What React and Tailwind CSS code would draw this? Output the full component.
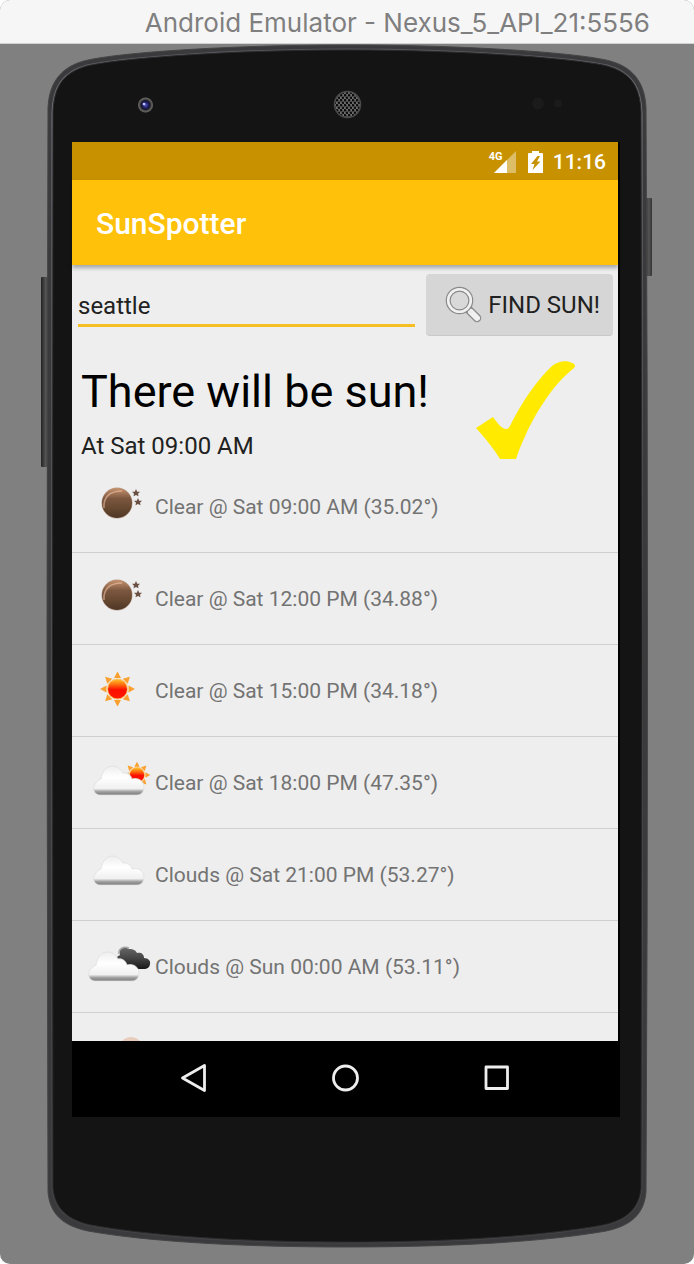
import React, { useState } from "react";

const SHELL =
  "M307 1 C430 1 540 9 570 17 C596 24 605 42 606 64 Q609 604 606 1148 C604 1171 590 1182 566 1187 C510 1197 420 1203 307 1203 C194 1203 104 1197 48 1187 C24 1182 10 1171 8 1148 Q6 604 8 64 C9 42 18 24 44 17 C74 9 184 1 307 1 Z";
const FACE =
  "M307 6 C430 6 538 15 567 22 C592 29 600 44 601 68 Q603 604 601 1144 C599 1165 586 1176 563 1181 C508 1191 420 1198 307 1198 C194 1198 106 1191 51 1181 C28 1176 15 1165 13 1144 Q12 604 13 68 C14 44 22 29 47 22 C76 15 184 6 307 6 Z";

function DeviceShell() {
  return (
    <svg
      className="absolute inset-0 h-full w-full"
      viewBox="0 0 614 1204"
      preserveAspectRatio="none"
      aria-hidden="true"
    >
      <defs>
        <linearGradient id="key" x1="0" x2="1" y1="0" y2="0">
          <stop offset="0" stopColor="#222" />
          <stop offset="0.6" stopColor="#555" />
          <stop offset="1" stopColor="#333" />
        </linearGradient>
        <linearGradient id="rim" x1="0" x2="0" y1="0" y2="1">
          <stop offset="0" stopColor="#55555a" />
          <stop offset="0.06" stopColor="#76767c" />
          <stop offset="0.6" stopColor="#5a5a5e" />
          <stop offset="1" stopColor="#424244" />
        </linearGradient>
        <pattern id="mesh" width="4" height="5" patternUnits="userSpaceOnUse">
          <rect width="4" height="5" fill="#6c6c6c" />
          <circle cx="1" cy="1.2" r="1.3" fill="#0c0c0c" />
          <circle cx="3" cy="3.7" r="1.3" fill="#0c0c0c" />
        </pattern>
        <radialGradient id="lens">
          <stop offset="0" stopColor="#5a5ad0" />
          <stop offset="0.35" stopColor="#23236e" />
          <stop offset="0.6" stopColor="#14142a" />
          <stop offset="0.75" stopColor="#4c4a48" />
          <stop offset="1" stopColor="#6c6c6c" />
        </radialGradient>
      </defs>
      <rect x="1" y="233" width="8" height="190" rx="1" fill="url(#key)" />
      <rect x="604" y="154" width="8" height="78" rx="1" fill="url(#key)" />
      <path d={SHELL} fill="#3a3a3c" stroke="#444446" strokeWidth="1" />
      <path d={FACE} fill="#141414" stroke="url(#rim)" strokeWidth="3" />
      <path d={FACE} fill="#141414" stroke="#29292b" strokeWidth="1" />
      <circle cx="105.500" cy="61" r="7.500" fill="url(#lens)" />
      <circle cx="104" cy="60" r="1.300" fill="#c5c5ff" />
      <circle cx="307.500" cy="60.500" r="13" fill="url(#mesh)" stroke="#4a4a4a" strokeWidth="1.500" />
      <circle cx="498" cy="59.500" r="6" fill="#1b1b1b" />
      <circle cx="518" cy="59.500" r="4" fill="#1b1b1b" />
    </svg>
  );
}

const CLOUD =
  "M7 29 C1 29 -1 22 2 18 C4 15 6 14 8 13 C9 6 13 0 19 0 C24 0 28 3 30 7 C34 6 38 9 39 13 C45 11 51 15 51 21 C51 26 48 29 44 29 Z";

function Star({ x, y }) {
  return (
    <path
      transform={`translate(${x} ${y})`}
      d="M0 -4 L1.200 -1.300 L4 -1.300 L2 0.700 L2.500 3.300 L0 2 L-2.500 3.300 L-2 0.700 L-4 -1.300 L-1.200 -1.300 Z"
      fill="#6b5044"
    />
  );
}

function Moon({ cx = 45, cy = 42, r = 15 }) {
  return (
    <g>
      <circle cx={cx} cy={cy} r={r + 0.5} fill="#b79f92" />
      <circle cx={cx} cy={cy} r={r} fill="url(#moonFill)" />
      <path
        d={`M${cx - r + 2} ${cy + 5} C${cx - r + 1} ${cy - 6} ${cx - 7} ${cy - r + 3} ${cx + 5} ${cy - r + 3}`}
        fill="none"
        stroke="#f0c3a6"
        strokeWidth="1.500"
        opacity="0.6"
      />
    </g>
  );
}

function Sun({ cx, cy, scale = 1 }) {
  return (
    <g transform={`translate(${cx} ${cy}) scale(${scale})`}>
      {[0, 45, 90, 135, 180, 225, 270, 315].map((a) => (
        <path key={a} transform={`rotate(${a})`} d="M-3.500 -11 L0 -17.500 L3.500 -11 Z" fill="#f9a030" />
      ))}
      <circle r="10.500" fill="#ffc46a" />
      <circle r="9.500" fill="url(#sunFill)" />
    </g>
  );
}

function Cloud({ x, y }) {
  return (
    <g transform={`translate(${x} ${y})`}>
      <path d={CLOUD} fill="url(#cloudFill)" stroke="#dedede" strokeWidth="0.800" />
    </g>
  );
}

function WeatherIcon({ kind }) {
  return (
    <svg className="h-[91px] w-[83px] shrink-0" viewBox="0 0 83 91" aria-hidden="true">
      <defs>
        <linearGradient id="moonFill" x1="0" x2="0" y1="0" y2="1">
          <stop offset="0" stopColor="#c6926c" />
          <stop offset="0.350" stopColor="#7c5740" />
          <stop offset="0.700" stopColor="#654730" />
          <stop offset="1" stopColor="#4e3626" />
        </linearGradient>
        <linearGradient id="sunFill" x1="0" x2="0" y1="0" y2="1">
          <stop offset="0" stopColor="#ffc02a" />
          <stop offset="0.250" stopColor="#ff7410" />
          <stop offset="0.550" stopColor="#fb0d00" />
          <stop offset="1" stopColor="#ff1800" />
        </linearGradient>
        <linearGradient id="cloudFill" x1="0" x2="0" y1="0" y2="1">
          <stop offset="0" stopColor="#eeeeee" />
          <stop offset="0.400" stopColor="#ffffff" />
          <stop offset="0.780" stopColor="#f0f0f0" />
          <stop offset="0.880" stopColor="#a2a2a2" />
          <stop offset="1" stopColor="#787878" />
        </linearGradient>
        <linearGradient id="darkFill" x1="0" x2="0" y1="0" y2="1">
          <stop offset="0" stopColor="#666" />
          <stop offset="0.500" stopColor="#444" />
          <stop offset="1" stopColor="#181818" />
        </linearGradient>
      </defs>
      {kind === "night" && (
        <>
          <Moon />
          <Star x={64} y={32} />
          <Star x={66} y={41} />
        </>
      )}
      {kind === "sun" && <Sun cx={45.5} cy={44} />}
      {kind === "cloudSun" && (
        <>
          <Sun cx={65} cy={38} scale={0.76} />
          <Cloud x={21} y={29} />
        </>
      )}
      {kind === "cloud" && <Cloud x={21} y={27} />}
      {kind === "darkCloud" && (
        <>
          <path
            d="M44 40 C44 36 46 35 48 34 C46 28 52 25 57 28 C62 28 64 30 65 32 C69 31 72 33 72 37 C76 37 79 40 78 43 C78 46 75 48 72 48 L56 48 C49 48 44 45 44 40 Z"
            fill="url(#darkFill)"
          />
          <path d="M47 33 C46 28 51 25 57 27" fill="none" stroke="#a5a5a5" strokeWidth="1.500" />
          <Cloud x={16} y={31} />
        </>
      )}
      {kind === "cloudMoon" && (
        <>
          <circle cx="59" cy="36" r="12" fill="#e9cdbc" />
          <Cloud x={21} y={29} />
        </>
      )}
    </svg>
  );
}

const FORECAST = [
  { kind: "night", label: "Clear @ Sat 09:00 AM (35.02°)" },
  { kind: "night", label: "Clear @ Sat 12:00 PM (34.88°)" },
  { kind: "sun", label: "Clear @ Sat 15:00 PM (34.18°)" },
  { kind: "cloudSun", label: "Clear @ Sat 18:00 PM (47.35°)" },
  { kind: "cloud", label: "Clouds @ Sat 21:00 PM (53.27°)" },
  { kind: "darkCloud", label: "Clouds @ Sun 00:00 AM (53.11°)" },
  { kind: "cloudMoon", label: "" },
];

function StatusBar() {
  return (
    <div className="flex h-[38px] shrink-0 items-center justify-end bg-[#c79100] pt-[2px] pr-3 text-white">
      <div className="flex h-[22px]">
        <span className="relative">
          <svg className="ml-[5px] h-[22px] w-[22px]" viewBox="0 0 22 22" aria-hidden="true">
            <path d="M22 0 V22 H0 Z" fill="#fff" opacity="0.4" />
            <path d="M13 9 V22 H0 Z" fill="#fff" />
          </svg>
          <span className="absolute top-0 left-0 text-[11px] leading-[11px] font-bold">4G</span>
        </span>
        <svg className="ml-3 h-[22px] w-[15px]" viewBox="0 0 15 22" aria-hidden="true">
          <path d="M4 0 H11 V2 H14 Q15 2 15 3 V22 H0 V3 Q0 2 1 2 H4 Z" fill="#fff" />
          <path d="M9.500 5 L3 13 H6.500 L4.500 19 L12.500 10.500 H9 L12 5 Z" fill="#c79100" />
        </svg>
      </div>
      <span className="ml-[10px] text-[21px] leading-9 font-medium">11:16</span>
    </div>
  );
}

function SearchRow() {
  const [city, setCity] = useState("seattle");
  return (
    <form
      className="flex items-start gap-[11px] pt-[9px] pr-[5px] pl-[6px]"
      onSubmit={(e) => e.preventDefault()}
    >
      <input
        type="text"
        aria-label="City"
        value={city}
        onChange={(e) => setCity(e.target.value)}
        className="h-[53px] min-w-0 flex-1 border-b-3 border-[#f5bf24] bg-transparent pt-[14px] text-[24px] text-[#212121] outline-none"
      />
      <button
        type="submit"
        className="flex h-[62px] shrink-0 items-center gap-[5px] rounded-[4px] border-b border-[#c9c9c9] bg-[#d6d6d6] pr-[13px] pl-[19px] text-[24px] text-[#212121]"
      >
        <svg className="h-[38px] w-[38px]" viewBox="0 0 38 38" aria-hidden="true">
          <path d="M24 24 L32 32" stroke="#8a8a8a" strokeWidth="8.500" strokeLinecap="round" />
          <path d="M21 21 L26 26" stroke="#8a8a8a" strokeWidth="5" />
          <path d="M26 26 L32 32" stroke="#f1f1f1" strokeWidth="6" strokeLinecap="round" />
          <path d="M22 22 L27 27" stroke="#ededed" strokeWidth="2.500" />
          <circle cx="14.500" cy="14.500" r="11.300" fill="#d9d9d9" stroke="#8a8a8a" strokeWidth="5" />
          <circle cx="14.500" cy="14.500" r="11.300" fill="none" stroke="#f1f1f1" strokeWidth="2.600" />
        </svg>
        FIND SUN!
      </button>
    </form>
  );
}

function NavBar() {
  return (
    <nav className="grid h-[76px] shrink-0 grid-cols-3 bg-black pr-[46px] pb-[2px] pl-[46px]">
      <button type="button" aria-label="Back" className="flex items-center justify-center">
        <svg className="h-8 w-8" viewBox="0 0 32 32" fill="none" stroke="#eee" strokeWidth="2.800" strokeLinejoin="round">
          <path d="M26.500 3.500 V28.500 L4.500 16 Z" />
        </svg>
      </button>
      <button type="button" aria-label="Home" className="flex items-center justify-center">
        <svg className="h-8 w-8" viewBox="0 0 32 32" fill="none" stroke="#eee" strokeWidth="2.800">
          <circle cx="15.500" cy="16" r="12" />
        </svg>
      </button>
      <button type="button" aria-label="Overview" className="flex items-center justify-center">
        <svg className="h-8 w-8" viewBox="0 0 32 32" fill="none" stroke="#eee" strokeWidth="2.800" strokeLinejoin="round">
          <rect x="4" y="5" width="21.500" height="21.500" />
        </svg>
      </button>
    </nav>
  );
}

export default function App() {
  return (
    <div className="h-screen bg-white">
      <div className="flex h-full flex-col overflow-hidden rounded-[10px] bg-[#808080] font-['Roboto',sans-serif]">
        <header className="h-11 shrink-0 border-b border-[#d2d2d2] bg-[#f6f6f6] pr-11 text-right font-['Inter',sans-serif] text-[26px] leading-[46px] whitespace-nowrap text-[#7f7f7f]">
          Android Emulator - Nexus_5_API_21:5556
        </header>
        <main className="relative mx-10 mb-4 flex min-h-0 flex-1 flex-col pt-[98px] pr-[34px] pb-[131px] pl-[32px]">
          <DeviceShell />
          <div className="relative flex min-h-0 flex-1 flex-col bg-black">
            <div className="mr-[2px] flex min-h-0 flex-1 flex-col bg-[#eeeeee]">
              <StatusBar />
              <div className="relative flex h-[85px] shrink-0 items-center bg-[#ffc10a] pt-[2px] pl-6 shadow-[0_3px_4px_rgba(0,0,0,0.3)]">
                <h1 className="text-[30px] leading-10 font-medium text-white">SunSpotter</h1>
              </div>
              <div className="min-h-0 flex-1 overflow-hidden">
                <SearchRow />
                <section className="flex justify-between pt-[17px] pr-[43px] pl-[9px]">
                  <div>
                    <h2 className="text-[45px] leading-[78px] text-black">There will be sun!</h2>
                    <p className="text-[24px] leading-[30px] text-[#212121]">At Sat 09:00 AM</p>
                  </div>
                  <svg className="mt-2 h-[99px] w-[99px]" viewBox="0 0 99 99" aria-hidden="true">
                    <path
                      d="M0 67 L17 56 C22 63 26 68 30 68 C32 68 33 67 34 65 C44 44 60 20 76 5 C82 0 91 -1 96 2 C99 3 100 5 98 7 C76 24 54 58 40 98 H24 C18 88 9 77 0 67 Z"
                      fill="#ffea00"
                    />
                  </svg>
                </section>
                <ul>
                  {FORECAST.map(({ kind, label }) => (
                    <li key={kind + label} className="flex h-[92px] items-center border-b border-[#cecece] text-[21px] text-[#737373]">
                      <WeatherIcon kind={kind} />
                      <span className="pt-[2px]">{label}</span>
                    </li>
                  ))}
                </ul>
              </div>
            </div>
            <NavBar />
          </div>
        </main>
      </div>
    </div>
  );
}
